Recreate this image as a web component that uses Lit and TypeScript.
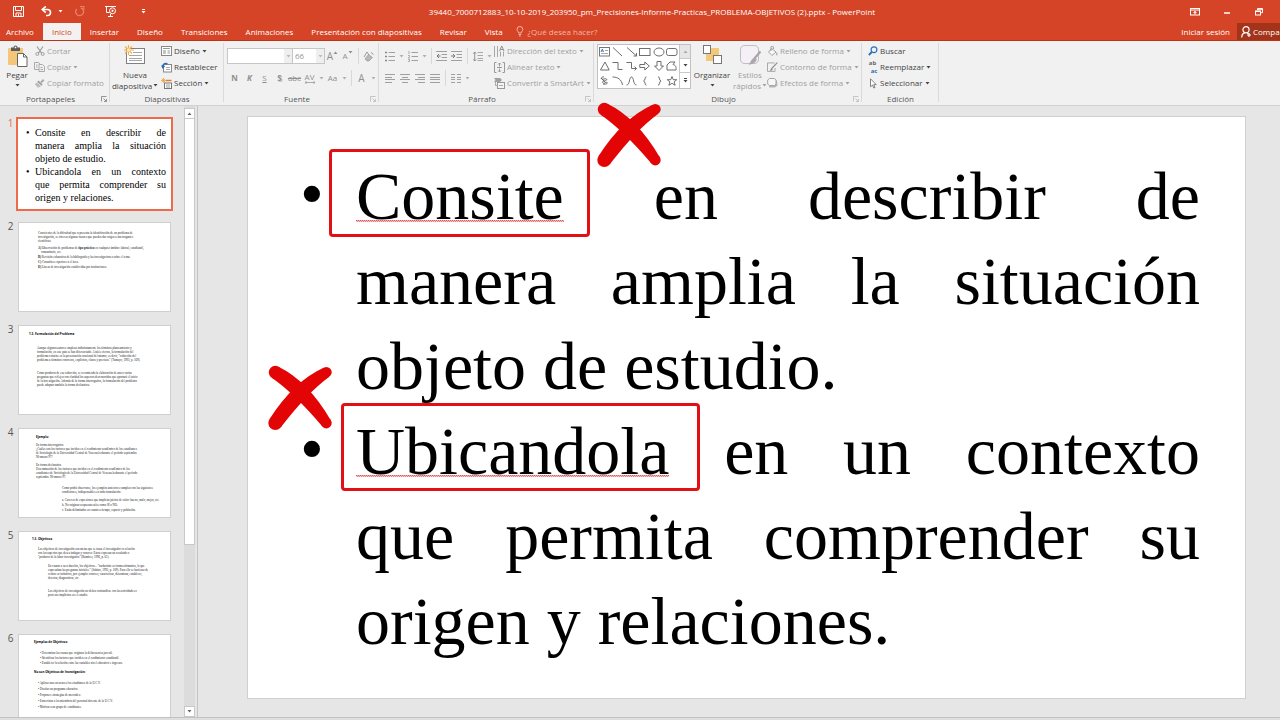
import { LitElement, html, svg, css, nothing, TemplateResult } from "lit";
import { customElement, property } from "lit/decorators.js";
import { classMap } from "lit/directives/class-map.js";

/* ---------- icons: name -> [width, height, drawing] ---------- */

const ICONS: Record<string, [number, number, TemplateResult]> = {
  save: [11, 11, svg`<g fill="none" stroke="#fff"><path d="M.5 .5h10v10h-10z"/><path d="M2.500 .5v4h6v-4"/><path d="M3 10.500v-3.500h5v3.500" /><path d="M5.500 8v2.500"/></g>`],
  undo: [11, 11, svg`<path d="M1.500 3.500H6.500a3 3 0 0 1 0 6H5" fill="none" stroke="#fff" stroke-width="1.600"/><path d="M4.800 .4L1.300 3.500l3.500 3.100" fill="none" stroke="#fff" stroke-width="1.600"/>`],
  redo: [11, 11, svg`<path d="M6.800 1.800A4 4 0 1 1 2.600 3" fill="none" stroke="#e98168" stroke-width="1.300"/><path d="M6 .4h3.800v3.500" fill="none" stroke="#e98168" stroke-width="1.200"/>`],
  show: [12, 11, svg`<g fill="none" stroke="#fff"><path d="M0 .5h11M1.500 1v5.500h3"/><path d="M5.500 8v2M3 10.500h5"/><circle cx="7.500" cy="4.800" r="3"/></g><path d="M6.700 3.200L9 4.800 6.700 6.400z" fill="#fff"/>`],
  more: [5, 5, svg`<path d="M1 .5h3" stroke="#fff"/><path d="M.5 2h4L2.500 4.500z" fill="#fff"/>`],
  ribbonOpts: [10, 8, svg`<rect x=".5" y=".5" width="9" height="6.500" fill="none" stroke="#fff"/><path d="M1 2h8" stroke="#fff"/><path d="M5 2.800l2 2H5.600v1.400H4.400V4.800H3z" fill="#fff"/>`],
  minimize: [7, 7, svg`<path d="M0 5h6" stroke="#fff" stroke-width="1.500"/>`],
  restore: [8, 8, svg`<g fill="none" stroke="#fff"><path d="M2.500 2V.7h5v4H6"/><rect x=".5" y="3" width="5" height="4"/><path d="M.5 3.400h5M2.500 1h5" stroke-width="1.300"/></g>`],
  bulb: [8, 11, svg`<path d="M2.600 7C2.600 5.500 1 5 1 3.400a2.900 2.900 0 0 1 5.800 0C6.800 5 5.200 5.500 5.200 7zM2.600 8.500h2.600M3 10h1.800" fill="none" stroke="#f4b5a5"/>`],
  person: [11, 12, svg`<g fill="none" stroke="#fff" stroke-width="1.200"><circle cx="5" cy="3.800" r="3.100"/><path d="M.7 11.500C.8 8.500 2 7 4 6.800M6 6.800l1.500 1"/><path d="M8 7v4M6 9h4"/></g>`],
  paste: [21, 22, svg`<rect x="1" y="3" width="15" height="17" rx="1" fill="#f5c679"/><path d="M4 2.500h2.500a2 2 0 0 1 4 0H13V6H4z" fill="#5b5b5b"/><circle cx="8.500" cy="2.400" r=".9" fill="#fff"/><path d="M10.500 8.500h6l3.500 3.500v9.500h-9.500z" fill="#fff" stroke="#666"/><path d="M16.500 8.500V12H20" fill="none" stroke="#666"/>`],
  cut: [10, 10, svg`<g fill="none" stroke="#a0a0a0"><path d="M2 .5l4.800 6.800M8 .5L3.200 7.300" stroke-width="1.300"/><circle cx="2.300" cy="8" r="1.500"/><circle cx="7.700" cy="8" r="1.500"/></g>`],
  copy: [11, 10, svg`<g fill="#f1f1f1" stroke="#aaa"><path d="M.5 .5h4l1.500 1.500v5.500H.5z"/><path d="M5 2.500h3.500L10.500 4.500v5H5z"/><path d="M6.500 5.500h2M6.500 7.500h2.500M2 3h1.500M2 5h1.500" /></g>`],
  brush: [11, 9, svg`<path d="M7 3.500L9.700.8" stroke="#aaa" stroke-width="2"/><path d="M4.500 1.500l4 4-1 1.200-4.200-4z" fill="#999"/><path d="M3 3.200l4 4L4 8.800.8 5.200z" fill="#bdbdbd"/>`],
  newSlide: [22, 20, svg`<rect x="2.500" y="3.500" width="18" height="15" fill="#fff" stroke="#808080"/><path d="M9 7.500h9M5 10.500h13M5 13.500h13M5 15.500h13" stroke="#a5a5a5"/><path d="M4.500 0v10M0 5h10M1 1.500l7 7M8 1.500l-7 7" stroke="#f2b04c" stroke-width="1.200"/><circle cx="4.500" cy="5" r="1.800" fill="#fde7bd"/>`],
  layout: [11, 10, svg`<rect x=".5" y=".5" width="10" height="9" fill="#fff" stroke="#888"/><path d="M2 2.500h7M6.500 5h2.500M6.500 7h2.500" stroke="#999"/><rect x="2" y="4" width="3" height="4" fill="#c4c4c4"/>`],
  reset: [11, 11, svg`<rect x="2.500" y="2.500" width="8" height="7.500" fill="#fff" stroke="#888"/><path d="M5 5.500h4M5 7.500h4" stroke="#aaa"/><path d="M1.800 6C.8 3 3 1 6.500 1.800" fill="none" stroke="#2b6cb0" stroke-width="1.500"/><path d="M0 3.500l2 3.500 2.200-3.200z" fill="#2b6cb0"/>`],
  section: [11, 11, svg`<path d="M2.500 0v5M0 2.500h5M.8.8l3.400 3.400M4.200.8L.8 4.200" stroke="#f2a23c" stroke-width=".8"/><path d="M5 2.500h5.500" stroke="#e07b2e" stroke-width="1.500"/><rect x="3.500" y="5" width="7" height="5.500" fill="#fff" stroke="#777"/><path d="M5 7h4M5 9h4" stroke="#999"/>`],
  eraser: [11, 11, svg`<path d="M5.500 3.500l4 3-3.500 3.500H4L2 8z" fill="#b8b8b8" stroke="#999" stroke-width=".7"/><path d="M1 6l3-5 2 3M8 1.500l2.500 2" stroke="#9a9a9a" fill="none"/>`],
  bullets: [10, 11, svg`<path d="M3.500 1.500H10M3.500 5.500H10M3.500 9.500H10" stroke="#a0a0a0"/><path d="M0 1.500h2M0 5.500h2M0 9.500h2" stroke="#888" stroke-width="1.500"/>`],
  numbers: [10, 11, svg`<path d="M3.500 1.500H10M3.500 5.500H10M3.500 9.500H10" stroke="#a0a0a0"/><path d="M1 0v3M0 4.500h1.500v1L.3 7H2M0 8.500h1.500v2H0" fill="none" stroke="#999" stroke-width=".8"/>`],
  outdent: [11, 10, svg`<path d="M0 .5h11M5.500 3.500H11M5.500 6.500H11M0 9.500h11" stroke="#a0a0a0"/><path d="M4.500 5H1M3 3L1 5l2 2" fill="none" stroke="#777"/>`],
  indent: [11, 10, svg`<path d="M0 .5h11M5.500 3.500H11M5.500 6.500H11M0 9.500h11" stroke="#a0a0a0"/><path d="M0 5h3.500M2 3l2 2-2 2" fill="none" stroke="#777"/>`],
  spacing: [10, 11, svg`<path d="M4.500 1.500H10M4.500 4.500H10M4.500 7.500H10M4.500 9.500H10" stroke="#a8a8a8"/><path d="M1.700 1v9M.2 2.700L1.700 1l1.500 1.700M.2 8.300L1.700 10l1.500-1.700" fill="none" stroke="#888" stroke-width=".9"/>`],
  left: [10, 9, svg`<path d="M0 .5h10M0 3.500h7M0 5.500h10M0 8.500h7" stroke="#a0a0a0"/>`],
  center: [10, 9, svg`<path d="M0 .5h10M2 3.500h6M0 5.500h10M2 8.500h6" stroke="#a0a0a0"/>`],
  right: [10, 9, svg`<path d="M0 .5h10M3 3.500h7M0 5.500h10M3 8.500h7" stroke="#a0a0a0"/>`],
  justify: [10, 9, svg`<path d="M0 .5h10M0 3.500h10M0 5.500h10M0 8.500h10" stroke="#a0a0a0"/>`],
  columns: [10, 9, svg`<path d="M0 .5h4M0 3.500h4M0 5.500h4M0 8.500h4M6 .5h4M6 3.500h4M6 5.500h4M6 8.500h4" stroke="#a0a0a0"/>`],
  textDir: [11, 11, svg`<path d="M.5 0v11M3.500 0v11M6.500 5.500v5M9.500 5.500v5" stroke="#a8a8a8"/><path d="M5.500 5L7.700 0l2.300 5M6.300 3.500h3" fill="none" stroke="#909090"/>`],
  textAlign: [11, 11, svg`<path d="M2.500 .5h-2v10h2M8.500 .5h2v10h-2M3 5.500h5" fill="none" stroke="#999"/><path d="M5.500 1v3.500M4 2.500L5.500 1 7 2.500M5.500 10V6.500M4 8.500L5.500 10 7 8.500" fill="none" stroke="#888" stroke-width=".8"/>`],
  smart: [11, 11, svg`<path d="M0 0h6l2 2-2 2H0l1.500-2z" fill="#a0a0a0"/><rect x="3.500" y="4.500" width="7" height="6" fill="#f5f5f5" stroke="#999"/><path d="M1.500 3.500v4h2M5 7.500h4" fill="none" stroke="#aaa"/>`],
  arrange: [19, 20, svg`<rect x="8" y="3" width="8" height="7" fill="#f3c878"/><rect x="3" y="9" width="8" height="7" fill="#f3c878"/><rect x=".5" y=".5" width="7" height="8" fill="#fff" stroke="#777"/><rect x="10.500" y="10.500" width="8" height="8" fill="#fff" stroke="#777"/>`],
  styles: [21, 21, svg`<path d="M5 .5h9q4.500 0 4.500 4.500v9q0 4.500-4.500 4.500H5Q.5 18.500.5 14V5Q.5.5 5 .5z" fill="#f4f0f6" stroke="#c3bcc6"/><path d="M20.500 6.500L14 14" stroke="#a5a5a5" stroke-width="2.200"/><path d="M14.500 12.500l2.300 2c-1 3-3.500 4.500-8.300 5.300 1.800-1.600 2.600-5.800 6-7.300z" fill="#a9a9a9"/>`],
  fill: [11, 11, svg`<path d="M4.500 2.500L9 6 5 9.500 1.500 6z" fill="#f7f7f7" stroke="#a5a5a5"/><path d="M4 5V1.300a1.200 1.200 0 0 1 2.400 0V3M9.800 6.500v2.800" fill="none" stroke="#999"/>`],
  outline: [11, 10, svg`<path d="M7.500 .9h-7v8.500h7.500V6" fill="none" stroke="#aaa"/><path d="M10.300.6L4.600 6.500 4 8l1.500-.7" fill="none" stroke="#909090" stroke-width="1.300"/>`],
  effects: [11, 10, svg`<path d="M3 2.500h7l.5 5L8 9.500H2z" fill="#b5b5b5"/><path d="M2.500 .5h5L9 2v4L7.500 7.500h-5L.7 6V2z" fill="#f7f7f7" stroke="#a5a5a5"/>`],
  find: [10, 10, svg`<circle cx="6" cy="3.700" r="2.900" fill="#eaf3fb" stroke="#2f6fae" stroke-width="1.200"/><path d="M3.800 6L.8 9" stroke="#2f6fae" stroke-width="1.800"/>`],
  cursor: [8, 11, svg`<path d="M1.500 .8v8l2-1.800 1.300 3 1.200-.5-1.300-2.900h2.500z" fill="#fff" stroke="#777" stroke-width=".9"/>`],
  launcher: [6, 6, svg`<path d="M.5 5.500v-5h5M2.500 2.500l3 3M5.500 3v2.500H3" fill="none" stroke="currentColor" stroke-width=".9"/>`],
  /* shapes gallery */
  gText: [12, 10, svg`<rect x=".5" y=".5" width="10" height="8.500" fill="#fff" stroke="#777"/><path d="M2 5l1.300-3L4.600 5M2.500 4h1.600" fill="none" stroke="#2f6fae" stroke-width=".8"/><path d="M6 3.500h3M2 6.500h7" stroke="#aaa"/>`],
  gLine: [12, 10, svg`<path d="M1 .5l9 8.500"/>`],
  gArrow: [12, 10, svg`<path d="M1 .5l9.500 8.500M10.500 6v3H7.500"/>`],
  gRect: [12, 10, svg`<rect x=".5" y="1.500" width="10.500" height="7"/>`],
  gOval: [12, 10, svg`<ellipse cx="6" cy="5" rx="5" ry="4"/>`],
  gRound: [12, 10, svg`<rect x=".5" y="1.500" width="10.500" height="7" rx="2"/>`],
  gTri: [12, 10, svg`<path d="M6 1l4.200 8H1.500z"/>`],
  gElbow: [12, 10, svg`<path d="M.5 1.500H6v7h4.500"/>`],
  gElbowArrow: [12, 10, svg`<path d="M.5 1.500H5.500v6H10.500M8.500 5.500l2 2-2 2"/>`],
  gRight: [12, 10, svg`<path d="M.8 3.500h5V1l4.500 4-4.500 4V6.500h-5z"/>`],
  gDown: [12, 10, svg`<path d="M4 .5h4V5h2.500L6 9.500 1.500 5H4z"/>`],
  gFree: [12, 10, svg`<path d="M1 9V4l3-3h5L7 3.500C9 4 10.500 5 10 9z"/>`],
  gScribble: [12, 10, svg`<path d="M5 .8C1 1 1.500 4 5 3s4 1.500 0 2 1 4.500 3 2.500S4 6 5 9M2 2l4 4"/>`],
  gCurve: [12, 10, svg`<path d="M.5 1C6 1 9.500 3.500 10.500 9"/>`],
  gWave: [12, 10, svg`<path d="M.5 9C4 9 3 1 5.500 1S7 9 10.500 9"/>`],
  gBraceL: [12, 10, svg`<path d="M7.500.8C5 .8 7 4.500 4.500 5 7 5.500 5 9.200 7.500 9.200"/>`],
  gBraceR: [12, 10, svg`<path d="M5 .8C7.500.8 5.500 4.500 8 5 5.500 5.500 7.500 9.200 5 9.200"/>`],
  gStar: [12, 10, svg`<path d="M6 .5l1.300 3.200h3.500L8.100 5.800l1 3.500L6 7.300l-3.100 2 1-3.500L1.200 3.700h3.500z"/>`],
};

const icon = (name: string, cls = "") => {
  const [w, h, body] = ICONS[name];
  return html`<svg class="ico ${cls}" width=${w} height=${h} viewBox="0 0 ${w} ${h}" aria-hidden="true">${body}</svg>`;
};

const caret = (cls = "") =>
  html`<svg class="caret ${cls}" width="5" height="3" viewBox="0 0 5 3" aria-hidden="true"><path d="M.5 0h4L2.500 2.500z" fill="currentColor"/></svg>`;

const baseStyles = css`
  * { box-sizing: border-box; }
  button, select, input {
    font: inherit; color: inherit; background: none; border: 0; padding: 0; margin: 0; border-radius: 0;
  }
  button { display: flex; align-items: center; white-space: nowrap; }
  svg { flex: none; display: block; }
`;

/* ---------- title bar and tabs ---------- */

@customElement("pp-header")
class PpHeader extends LitElement {
  static styles = [baseStyles, css`
    :host { display: block; background: #d54426; color: #fff; border-bottom: 1px solid #b93516; }
    .title { display: flex; align-items: center; height: 23px; }
    .quick { display: flex; flex: none; align-items: center; padding-left: 2px; }
    .quick button { justify-content: center; width: 32px; height: 22px; }
    .quick .slim { width: 24px; }
    .name { flex: 1; text-align: center; white-space: nowrap; line-height: 24px; }
    .win { display: flex; flex: none; padding: 0 5px 0 34px; }
    .win button { justify-content: center; width: 32px; height: 22px; }
    .tabs { display: flex; align-items: stretch; height: 17px; }
    .tab { padding: 0 9px; line-height: 17px; }
    .tab.file { padding: 0 9px 0 6px; }
    .tab.on { background: #f3f2f1; color: #d54426; }
    .ask { display: flex; align-items: center; gap: 4px; padding-left: 4px; color: #f4b5a5; }
    .grow { flex: 1; }
    .share { gap: 1px; padding-left: 4px; width: 43px; background: #a33419; }
    .signin { padding-right: 7px; }
  `];
  render() {
    const tabs = ["Archivo", "Inicio", "Insertar", "Diseño", "Transiciones", "Animaciones", "Presentación con diapositivas", "Revisar", "Vista"];
    return html`
      <div class="title">
        <div class="quick">
          <button aria-label="Guardar">${icon("save")}</button>
          <button class="slim" aria-label="Deshacer">${icon("undo")}</button>
          ${caret()}
          <button aria-label="Rehacer">${icon("redo")}</button>
          <button aria-label="Presentación">${icon("show")}</button>
          <button aria-label="Personalizar">${icon("more")}</button>
        </div>
        <div class="name">39440_7000712883_10-10-2019_203950_pm_Precisiones-Informe-Practicas_PROBLEMA-OBJETIVOS (2).pptx - PowerPoint</div>
        <div class="win">
          <button aria-label="Opciones de la cinta">${icon("ribbonOpts")}</button>
          <button aria-label="Minimizar">${icon("minimize")}</button>
          <button aria-label="Restaurar">${icon("restore")}</button>
        </div>
      </div>
      <nav class="tabs">
        ${tabs.map((t, i) => html`<button class=${classMap({ tab: true, file: i === 0, on: i === 1 })}>${t}</button>`)}
        <button class="ask">${icon("bulb")}¿Qué desea hacer?</button>
        <span class="grow"></span>
        <button class="signin">Iniciar sesión</button>
        <button class="share">${icon("person")}Compa</button>
      </nav>`;
  }
}

/* ---------- ribbon ---------- */

const GALLERY = [
  "gText", "gLine", "gArrow", "gRect", "gOval", "gRound",
  "gTri", "gElbow", "gElbowArrow", "gRight", "gDown", "gFree",
  "gScribble", "gCurve", "gWave", "gBraceL", "gBraceR", "gStar",
];

@customElement("pp-ribbon")
class PpRibbon extends LitElement {
  static styles = [baseStyles, css`
    :host { display: flex; background: #f1f1f1; color: #444; border-bottom: 1px solid #d2d2d2; height: 65px; }
    .group { display: flex; flex-direction: column; flex: none; position: relative; padding-top: 1px; }
    .group::after { content: ""; position: absolute; right: 0; top: 2px; bottom: 3px; width: 1px; background: #dadada; }
    .clip { width: 110px; } .slides { width: 114px; } .font { width: 155px; }
    .para { width: 215px; } .draw { width: 268px; } .edit { width: 77px; }
    .body { display: flex; height: 51px; }
    .foot { display: flex; align-items: center; height: 12px; line-height: 12px; color: #555; }
    .foot span { flex: 1; text-align: center; }
    .foot svg { margin-right: 3px; color: #888; }
    .foot .off { color: #c0c0c0; }
    .rows { display: flex; flex-direction: column; padding-top: 1px; }
    .rows button { height: 16px; gap: 2px; }
    .rows .pic { display: flex; justify-content: center; width: 11px; }
    .dim { color: #a0a0a0; }
    .big { flex-direction: column; line-height: 11px; justify-content: flex-start; padding-top: 3px; }
    .big .art { display: flex; align-items: flex-start; height: 24px; }
    .big .line { display: flex; align-items: center; gap: 1px; height: 11px; }
    .paste { width: 34px; } .new { width: 50px; } .arr { width: 42px; } .sty { width: 34px; }
    .stack { display: flex; flex-direction: column; padding: 1px 0 0 3px; }
    .tools { display: flex; align-items: center; height: 16px; color: #909090; }
    .tools.first { margin: 5px 0 6px; }
    .tools button { justify-content: center; width: 15px; height: 16px; }
    .tools .drop { width: 8px; color: #b0b0b0; }
    .sep { width: 6px; height: 16px; display: flex; justify-content: center; }
    .sep::before { content: ""; width: 1px; background: #d8d8d8; }
    .combo { display: flex; align-items: center; height: 16px; background: #fff; border: 1px solid #c6c6c6; color: #999; }
    .combo select { appearance: none; flex: 1; height: 14px; min-width: 0; padding-left: 2px; outline: 0; }
    .combo .arrow { display: flex; align-items: center; justify-content: center; width: 8px; height: 14px; background: #efefef; color: #bbb; }
    .face { width: 66px; } .size { width: 32px; border-left: 0; }
    .b { font-weight: 700; } .i { font-style: italic; font-weight: 700; } .u { text-decoration: underline; }
    .sh { text-shadow: 1px 1px 0 #c8c8c8; font-weight: 700; } .st { text-decoration: line-through; }
    .glyph { font-size: 10px; }
    .tools .top { align-self: flex-start; margin-top: 3px; }
    .kern { display: grid; justify-items: center; line-height: 8px; }
    .gallery { display: flex; margin: 2px 0 0 3px; width: 94px; height: 45px; border: 1px solid #c2c2c2; background: #fff; }
    .cells { flex: 1; display: grid; grid-template-columns: repeat(6, 1fr); grid-template-rows: repeat(3, 1fr); align-items: center; justify-items: center; }
    .cells svg { fill: none; stroke: #6e6e6e; }
    .scroll { display: grid; width: 11px; }
    .scroll button { justify-content: center; border-left: 1px solid #c8c8c8; border-bottom: 1px solid #c8c8c8; }
    .scroll button:first-child { background: #e6e6e6; color: #aaa; }
    .scroll button:last-child { border-bottom: 0; }
    .up { transform: rotate(180deg); }
    .swap { display: grid; line-height: 8px; font-weight: 700; color: #666; font-size: 6px; }
    .swap em { font-style: normal; color: #2f6fae; padding-left: 3px; }
    .c-edit { padding-left: 5px; }
    .c-slides, .c-para { padding-left: 1px; }
  `];

  foot(label: string, launch: "" | "on" | "off" = "") {
    return html`<div class="foot"><span>${label}</span>${launch ? icon("launcher", launch) : nothing}</div>`;
  }
  row(ic: string | TemplateResult, label: string, drop = false, dim = false) {
    return html`<button class=${dim ? "dim" : ""}><span class="pic">${typeof ic === "string" ? icon(ic) : ic}</span>${label}${drop ? caret() : nothing}</button>`;
  }
  tool(content: TemplateResult, label: string, drop = false) {
    return html`<button aria-label=${label}>${content}</button>${drop ? html`<button class="drop" aria-label="${label}, opciones">${caret()}</button>` : nothing}`;
  }

  render() {
    const g = (cls: string, t: string) => html`<span class=${cls}>${t}</span>`;
    return html`
      <section class="group clip">
        <div class="body">
          <button class="big paste"><span class="art">${icon("paste")}</span><span class="line">Pegar</span><span class="line">${caret()}</span></button>
          <div class="rows">
            ${this.row("cut", "Cortar", false, true)}
            ${this.row("copy", "Copiar", true, true)}
            ${this.row("brush", "Copiar formato", false, true)}
          </div>
        </div>
        ${this.foot("Portapapeles", "on")}
      </section>
      <section class="group slides">
        <div class="body">
          <button class="big new"><span class="art">${icon("newSlide")}</span><span class="line">Nueva</span><span class="line">diapositiva${caret()}</span></button>
          <div class="rows c-slides">
            ${this.row("layout", "Diseño", true)}
            ${this.row("reset", "Restablecer")}
            ${this.row("section", "Sección", true)}
          </div>
        </div>
        ${this.foot("Diapositivas")}
      </section>
      <section class="group font">
        <div class="body"><div class="stack">
          <div class="tools first">
            <span class="combo face"><select aria-label="Fuente"><option></option></select><span class="arrow">${caret()}</span></span>
            <span class="combo size"><select aria-label="Tamaño de fuente"><option>66</option></select><span class="arrow">${caret()}</span></span>
            ${this.tool(html`<span class="glyph">A</span>${caret("up top")}`, "Aumentar tamaño")}
            ${this.tool(html`A${caret("top")}`, "Disminuir tamaño")}
            <span class="sep"></span>
            ${this.tool(icon("eraser"), "Borrar formato")}
          </div>
          <div class="tools">
            ${this.tool(g("b", "N"), "Negrita")}
            ${this.tool(g("i", "K"), "Cursiva")}
            ${this.tool(g("u", "S"), "Subrayado")}
            ${this.tool(g("sh", "S"), "Sombra")}
            ${this.tool(g("st", "abc"), "Tachado")}
            ${this.tool(html`<span class="kern">AV<svg width="10" height="3" viewBox="0 0 10 3"><path d="M0 1.500h10M1.500 0L0 1.500 1.500 3M8.500 0L10 1.500 8.500 3" fill="none" stroke="#999" stroke-width=".8"/></svg></span>`, "Espaciado", true)}
            ${this.tool(html`Aa`, "Mayúsculas", true)}
            <span class="sep"></span>
            ${this.tool(g("glyph", "A"), "Color de fuente", true)}
          </div>
        </div></div>
        ${this.foot("Fuente", "off")}
      </section>
      <section class="group para">
        <div class="body">
          <div class="stack">
            <div class="tools first">
              ${this.tool(icon("bullets"), "Viñetas", true)}
              ${this.tool(icon("numbers"), "Numeración", true)}
              <span class="sep"></span>
              ${this.tool(icon("outdent"), "Reducir sangría")}
              ${this.tool(icon("indent"), "Aumentar sangría")}
              <span class="sep"></span>
              ${this.tool(icon("spacing"), "Interlineado", true)}
            </div>
            <div class="tools">
              ${this.tool(icon("left"), "Izquierda")}
              ${this.tool(icon("center"), "Centrar")}
              ${this.tool(icon("right"), "Derecha")}
              ${this.tool(icon("justify"), "Justificar")}
              <span class="sep"></span>
              ${this.tool(icon("columns"), "Columnas", true)}
            </div>
          </div>
          <div class="rows c-para">
            ${this.row("textDir", "Dirección del texto", true, true)}
            ${this.row("textAlign", "Alinear texto", true, true)}
            ${this.row("smart", "Convertir a SmartArt", true, true)}
          </div>
        </div>
        ${this.foot("Párrafo", "off")}
      </section>
      <section class="group draw">
        <div class="body">
          <div class="gallery">
            <div class="cells">${GALLERY.map((n) => icon(n))}</div>
            <div class="scroll">
              <button aria-label="Subir">${caret("up")}</button>
              <button aria-label="Bajar">${caret()}</button>
              <button aria-label="Más formas">${icon("more", "dark")}${nothing}</button>
            </div>
          </div>
          <button class="big arr"><span class="art">${icon("arrange")}</span><span class="line">Organizar</span><span class="line">${caret()}</span></button>
          <button class="big sty dim"><span class="art">${icon("styles")}</span><span class="line">Estilos</span><span class="line">rápidos${caret()}</span></button>
          <div class="rows">
            ${this.row("fill", "Relleno de forma", true, true)}
            ${this.row("outline", "Contorno de forma", true, true)}
            ${this.row("effects", "Efectos de forma", true, true)}
          </div>
        </div>
        ${this.foot("Dibujo", "off")}
      </section>
      <section class="group edit">
        <div class="body">
          <div class="rows c-edit">
            ${this.row("find", "Buscar")}
            ${this.row(html`<span class="swap">ab<em>ac</em></span>`, "Reemplazar", true)}
            ${this.row("cursor", "Seleccionar", true)}
          </div>
        </div>
        ${this.foot("Edición")}
      </section>`;
  }
}
/* the same glyph serves the title bar (white) and the gallery (grey) */
ICONS.more[2] = svg`<path d="M1 .5h3" stroke="currentColor"/><path d="M.5 2h4L2.500 4.500z" fill="currentColor"/>`;

/* ---------- slides ---------- */

interface Line { text: string; full?: boolean; }

const MAIN: Line[][] = [
  [
    { text: "Consite en describir de", full: true },
    { text: "manera amplia la situación", full: true },
    { text: "objeto de estudio." },
  ],
  [
    { text: "Ubicandola en un contexto", full: true },
    { text: "que permita comprender su", full: true },
    { text: "origen y relaciones." },
  ],
];

@customElement("pp-bullets")
class PpBullets extends LitElement {
  @property({ type: Boolean, reflect: true }) small = false;
  static styles = css`
    :host { display: block; font-family: "Liberation Serif", "Times New Roman", serif; color: #000; font-size: 68px; line-height: 85px; }
    :host([small]) { font-size: 10px; line-height: 13px; }
    ul { list-style: none; margin: 0; padding: 37px 45px 0 52px; }
    :host([small]) ul { padding: 7px 5px 0 8px; }
    li { display: grid; grid-template-columns: 56px 1fr; }
    :host([small]) li { grid-template-columns: 9px 1fr; }
    .dot { line-height: 79px; }
    :host([small]) .dot { line-height: 13px; }
    .line { white-space: nowrap; }
    .full { text-align: justify; text-align-last: justify; }
    .typo {
      background:
        repeating-linear-gradient(90deg, #e25555 0 1px, #f3b0b0 1px 2px) 0 66px / 100% 1px no-repeat,
        repeating-linear-gradient(90deg, #f7c8c8 0 1px, #e88080 1px 2px) 0 67px / 100% 1px no-repeat;
      display: inline-block;
    }
    :host([small]) .typo { background: none; }
  `;
  render() {
    return html`<ul>${MAIN.map((item) => html`<li><span class="dot">•</span><div>${item.map((l, i) => {
      if (i > 0) return html`<div class=${classMap({ line: true, full: !!l.full })}>${l.text}</div>`;
      const cut = l.text.indexOf(" ");
      return html`<div class="line full"><span class="typo">${l.text.slice(0, cut)}</span>${l.text.slice(cut)}</div>`;
    })}</div></li>`)}</ul>`;
  }
}

interface Block { x: number; gap: number; head?: boolean; lines: string[]; }

const THUMBS: Block[][] = [
  [
    { x: 19, gap: 8, lines: ["Conscientes de la dificultad que representa la identificación de un problema de", "investigación, se ofrecen algunas fuentes que pueden dar origen a interrogantes", "científicas:"] },
    { x: 19, gap: 3, lines: ["*A) |Observación de problemas de *tipo práctico| en cualquier ámbito: laboral, estudiantil,", "    comunitario, etc."] },
    { x: 19, gap: 1, lines: ["*B) |Revisión exhaustiva de la bibliografía y las investigaciones sobre el tema."] },
    { x: 19, gap: 1, lines: ["*C) |Consulta a expertos en el área."] },
    { x: 19, gap: 1, lines: ["*D) |Líneas de investigación establecidas por instituciones."] },
  ],
  [
    { x: 10, gap: 6, head: true, lines: ["1.3. Formulación del Problema"] },
    { x: 18, gap: 10, lines: ["Aunque algunos autores emplean indistintamente los términos planteamiento y", "formulación, en este país se han diferenciado. A tales efectos, la formulación del", "problema consiste en la presentación oracional del mismo, es decir, \"reducción del", "problema a términos concretos, explícitos, claros y precisos.\" (Tamayo, 1993, p. 169)."] },
    { x: 18, gap: 9, lines: ["Como producto de esa reducción, se recomienda la elaboración de una o varias", "preguntas que reflejen con claridad los aspectos desconocidos que aportará el inicio", "de la investigación. Además de la forma interrogativa, la formulación del problema", "puede adoptar también la forma declarativa."] },
  ],
  [
    { x: 17, gap: 6, head: true, lines: ["Ejemplo:"] },
    { x: 17, gap: 4, lines: ["En forma interrogativa", "¿Cuáles son los factores que inciden en el rendimiento académico de los estudiantes", "de Sociología de la Universidad Central de Venezuela durante el período septiembre", "96-marzo 97?"] },
    { x: 17, gap: 4, lines: ["En forma declarativa", "Determinación de los factores que inciden en el rendimiento académico de los", "estudiantes de Sociología de la Universidad Central de Venezuela durante el período", "septiembre 96-marzo 97."] },
    { x: 43, gap: 7, lines: ["Como podrá observarse, los ejemplos anteriores cumplen con las siguientes", "condiciones, indispensables en toda formulación:"] },
    { x: 43, gap: 4, lines: ["a. Carecen de expresiones que implican juicios de valor: bueno, malo, mejor, etc."] },
    { x: 43, gap: 1, lines: ["b. No originan respuestas tales como SÍ o NO."] },
    { x: 43, gap: 1, lines: ["c. Están delimitados en cuanto a tiempo, espacio y población."] },
  ],
  [
    { x: 13, gap: 5, head: true, lines: ["1.3. Objetivos"] },
    { x: 19, gap: 6, lines: ["Los objetivos de investigación son metas que se traza el investigador en relación", "con los aspectos que desea indagar y conocer. Estos expresan un resultado o", "\"producto de la labor investigativa\" (Ramírez, 1996, p. 61)."] },
    { x: 29, gap: 5, lines: ["En cuanto a su redacción, los objetivos... \"traducirán en forma afirmativa, lo que", "expresaban las preguntas iniciales.\" (Sabino, 1995, p. 109). Para ello se hará uso de", "verbos en infinitivo, por ejemplo: conocer, caracterizar, determinar, establecer,", "detectar, diagnosticar, etc."] },
    { x: 29, gap: 9, lines: ["Los objetivos de investigación no deben confundirse con las actividades o", "procesos implícitos en el estudio."] },
  ],
  [
    { x: 15, gap: 5, head: true, lines: ["Ejemplos de Objetivos:"] },
    { x: 21, gap: 7, lines: ["• Determinar las causas que originan la delincuencia juvenil."] },
    { x: 21, gap: 1, lines: ["• Identificar los factores que inciden en el rendimiento estudiantil."] },
    { x: 21, gap: 1, lines: ["• Establecer la relación entre las variables nivel educativo e ingresos."] },
    { x: 15, gap: 5, head: true, lines: ["No son Objetivos de Investigación:"] },
    { x: 19, gap: 7, lines: ["• Aplicar una encuesta a los estudiantes de la U.C.V."] },
    { x: 19, gap: 2, lines: ["• Diseñar un programa educativo."] },
    { x: 19, gap: 2, lines: ["• Proponer estrategias de mercadeo."] },
    { x: 19, gap: 2, lines: ["• Entrevistar a los miembros del personal docente de la U.C.V."] },
    { x: 19, gap: 2, lines: ["• Motivar a un grupo de estudiantes."] },
  ],
];

const rich = (t: string) =>
  t.split("|").map((part) => {
    const at = part.indexOf("*");
    return at < 0 ? part : html`${part.slice(0, at)}<b>${part.slice(at + 1)}</b>`;
  });

@customElement("pp-thumbs")
class PpThumbs extends LitElement {
  static styles = [baseStyles, css`
    :host { display: flex; min-height: 0; overflow: hidden; }
    ol { list-style: none; margin: 0; padding: 13px 13px 0 0; display: flex; flex-direction: column; gap: 13px; width: 184px; }
    li { display: grid; grid-template-columns: 18px 153px; }
    .num { font-size: 10px; line-height: 8px; color: #555; text-align: center; padding-left: 3px; }
    .num.on { color: #ee6a4b; }
    .card { height: 90px; background: #fff; border: 1px solid #cfcfcf; overflow: hidden; }
    .card.on { border: 0; outline: 2px solid #ee6a4b; }
    .block { font-family: "Liberation Serif", serif; font-size: 3px; line-height: 4px; color: #222; white-space: pre; }
    .block.head { font-family: "Open Sans", sans-serif; font-weight: 700; color: #000; }
    .bar { display: flex; flex-direction: column; width: 11px; background: #dcdcdc; padding-top: 2px; }
    .bar button { justify-content: center; height: 11px; background: #fff; border: 1px solid #c8c8c8; color: #666; }
    .grip { flex: 427; background: #fff; border: 1px solid #c8c8c8; border-top: 0; }
    .rest { flex: 162; }
    .up { transform: rotate(180deg); }
  `];
  render() {
    return html`
      <ol>
        <li><span class="num on">1</span><div class="card on"><pp-bullets small></pp-bullets></div></li>
        ${THUMBS.map((blocks, i) => html`<li><span class="num">${i + 2}</span><div class="card">
          ${blocks.map((b) => html`<div class=${classMap({ block: true, head: !!b.head })} style="padding:${b.gap}px 0 0 ${b.x}px">${b.lines.map((l) => html`<div>${rich(l)}</div>`)}</div>`)}
        </div></li>`)}
      </ol>
      <div class="bar">
        <button aria-label="Subir">${caret("up")}</button>
        <div class="grip"></div>
        <div class="rest"></div>
        <button aria-label="Bajar">${caret()}</button>
      </div>`;
  }
}

/* ---------- page ---------- */

const cross = (cls: string) => html`
  <svg class="cross ${cls}" width="65" height="66" viewBox="0 0 65 66" aria-hidden="true">
    <g fill="#e30505">
      <circle cx="7.300" cy="7.300" r="6.500"/><circle cx="58.300" cy="7.300" r="5.400"/>
      <circle cx="58.300" cy="58" r="5.400"/><circle cx="7.300" cy="58" r="7"/>
      <path d="M10.500 1.700Q40 16 62.600 55L54 61Q27 29 4.100 12.900z"/>
      <path d="M1.600 53.900Q26 16 55.600 2.700L61 11.900Q39 28 13 62.100z"/>
    </g>
  </svg>`;

@customElement("app-root")
class AppRoot extends LitElement {
  static styles = [baseStyles, css`
    :host {
      display: flex; flex-direction: column; height: 100vh; overflow: hidden; background: #e6e6e6;
      font-family: "Open Sans", "Noto Sans", sans-serif; font-size: 8px; line-height: 12px;
    }
    .work { flex: 1; display: flex; min-height: 0; }
    .split { width: 3px; border-right: 1px solid #c4c4c4; }
    .stage { flex: 1; display: flex; min-width: 0; padding: 10px 34px 18px 49px; }
    .slide { flex: 1; position: relative; background: #fff; border: 1px solid #d0d0d0; }
    .frame { position: absolute; height: 88px; border: 3px solid #e01014; border-radius: 4px; }
    .frame.a { left: 81px; top: 32px; width: 261px; }
    .frame.b { left: 93px; top: 286px; width: 359px; }
    .cross { position: absolute; }
    .cross.a { left: 349px; top: -15px; }
    .cross.b { left: 20px; top: 248px; }
    .status { height: 3px; border-top: 1px solid #c2c2c2; background: #dedede; }
  `];
  render() {
    return html`
      <pp-header></pp-header>
      <pp-ribbon></pp-ribbon>
      <main class="work">
        <pp-thumbs></pp-thumbs>
        <div class="split"></div>
        <div class="stage">
          <div class="slide">
            <pp-bullets></pp-bullets>
            <div class="frame a"></div>
            <div class="frame b"></div>
            ${cross("a")}${cross("b")}
          </div>
        </div>
      </main>
      <div class="status"></div>`;
  }
}
